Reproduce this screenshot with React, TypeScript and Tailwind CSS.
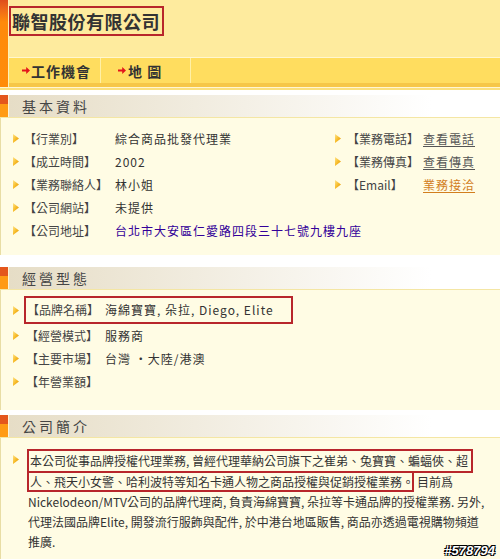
import React from "react";

const Bullet = () => (
  <svg width="6" height="9" viewBox="0 0 6 9" className="shrink-0">
    <defs>
      <linearGradient id="bulletg" x1="0" y1="0" x2="1" y2="1">
        <stop offset="0" stopColor="#FFE48A" />
        <stop offset="0.5" stopColor="#F7BC2A" />
        <stop offset="1" stopColor="#E08E00" />
      </linearGradient>
    </defs>
    <polygon points="0,0 6,4.5 0,9" fill="url(#bulletg)" />
  </svg>
);

const NavArrow = () => (
  <svg width="8" height="7" viewBox="0 0 8 7" className="shrink-0">
    <path d="M0 2.5h4.2V0L8 3.5 4.2 7V4.5H0z" fill="#E3141B" />
  </svg>
);

const SectionHeader = ({ title }: { title: string }) => (
  <div className="flex h-[23px] border-b border-[#F4E6A4]">
    <div className="w-[8px] flex flex-col">
      <div className="h-[9px] bg-[#E4561C]" />
      <div className="flex-1 bg-[#FF9A14]" />
    </div>
    <div className="w-[1px] bg-[#FFF4D6]" />
    <div className="flex-1 flex items-center pl-[13px] bg-[linear-gradient(to_right,#E6DDC6,#FFFFFF_86%)] text-[14px] tracking-[3px] text-[#454545] leading-none">
      {title}
    </div>
  </div>
);

const leftRows: { label: string; value: string; purple?: boolean }[] = [
  { label: "【行業別】", value: "綜合商品批發代理業" },
  { label: "【成立時間】", value: "2002" },
  { label: "【業務聯絡人】", value: "林小姐" },
  { label: "【公司網站】", value: "未提供" },
  { label: "【公司地址】", value: "台北市大安區仁愛路四段三十七號九樓九座", purple: true },
];

const rightRows: { label: string; value: string; orange?: boolean }[] = [
  { label: "【業務電話】", value: "查看電話" },
  { label: "【業務傳真】", value: "查看傳真" },
  { label: "【Email】", value: "業務接洽", orange: true },
];

export default function App() {
  return (
    <div className="relative w-[500px] h-[559px] overflow-hidden bg-white font-['Noto_Sans_CJK_TC','Noto_Sans',sans-serif] text-[#333]">
      {/* top area */}
      <div className="flex h-[87px]">
        <div className="w-[8px] bg-[linear-gradient(to_bottom,#DE4E1C_0px,#EF6A18_10px,#FF8A0A_22px,#FF8C0A_100%)]" />
        <div className="w-[1px] bg-[#FFF1B8]" />
        <div className="flex-1 flex flex-col">
          <div className="h-[57px] bg-[#FEEB9E] pt-[6px]">
            <div className="w-[155px] h-[30px] border-2 border-[#B8262B] flex items-center pl-[1px] text-[18px] font-bold leading-none text-[#333] tracking-[0.5px]">
              聯智股份有限公司
            </div>
          </div>
          <div className="h-[1px] bg-[#FFF6CF]" />
          <div className="h-[25px] bg-[#FFDD5F] flex text-[14px] font-bold tracking-[1px] text-[#333] leading-none">
            <div className="w-[92px] flex items-center pl-[13px] gap-[1px] border-r border-[#FFF0A6]">
              <NavArrow />
              <span>工作機會</span>
            </div>
            <div className="w-[90px] flex items-center pl-[17px] gap-[2px] border-r border-[#FFF0A6]">
              <NavArrow />
              <span className="whitespace-pre">地 圖</span>
            </div>
          </div>
          <div className="h-[4px] bg-[#F6C747]" />
        </div>
      </div>
      <div className="h-[1px] bg-[#FFF6D2]" />
      <div className="h-[2px] bg-[#FBE07C]" />
      <div className="h-[5px] bg-white" />

      {/* 基本資料 */}
      <SectionHeader title="基本資料" />
      <div className="h-[137px] bg-[#FFFCE4] border-l border-[#E8DDA4] pt-[9px] text-[12px] leading-none">
        {leftRows.map((r, i) => {
          const rr = rightRows[i];
          return (
            <div key={i} className="flex items-center h-[23px]">
              <div className="w-[23px] pl-[12px] flex items-center">
                <Bullet />
              </div>
              <div className="w-[91px] whitespace-nowrap text-[#444]">{r.label}</div>
              <div
                className={`w-[220px] whitespace-nowrap tracking-[1px] ${r.purple ? "text-[#330099]" : "text-[#333]"}`}
              >
                {r.value}
              </div>
              {rr && (
                <>
                  <div className="w-[12px] flex items-center">
                    <Bullet />
                  </div>
                  <div className="w-[76px] whitespace-nowrap text-[#444]">{rr.label}</div>
                  <div
                    className={`whitespace-nowrap tracking-[1px] underline underline-offset-2 ${rr.orange ? "text-[#D27E1E]" : "text-[#555]"}`}
                  >
                    {rr.value}
                  </div>
                </>
              )}
            </div>
          );
        })}
      </div>
      <div className="h-[12px] bg-white" />

      {/* 經營型態 */}
      <SectionHeader title="經營型態" />
      <div className="h-[120px] bg-[#FFFCE4] border-l border-[#E8DDA4] pt-[6px] text-[12px] leading-none">
        <div className="flex items-center h-[28px]">
          <div className="w-[23px] pl-[12px] flex items-center">
            <Bullet />
          </div>
          <div className="w-[269px] h-[28px] border-2 border-[#B8262B] flex items-center pl-[1px]">
            <div className="w-[78px] whitespace-nowrap text-[#444]">【品牌名稱】</div>
            <div className="whitespace-nowrap tracking-[1px]">海綿寶寶, 朵拉, Diego, Elite</div>
          </div>
        </div>
        {[
          ["【經營模式】", "服務商"],
          ["【主要市場】", "台灣 •大陸/港澳"],
          ["【年營業額】", ""],
        ].map(([l, v], i) => (
          <div key={i} className="flex items-center h-[23px]">
            <div className="w-[23px] pl-[12px] flex items-center">
              <Bullet />
            </div>
            <div className="w-[81px] pl-[2px] whitespace-nowrap text-[#444]">{l}</div>
            <div className="whitespace-pre tracking-[1px]">{v}</div>
          </div>
        ))}
      </div>
      <div className="h-[5px] bg-white" />

      {/* 公司簡介 */}
      <SectionHeader title="公司簡介" />
      <div className="h-[200px] bg-[#FFFCE4] border-l border-[#E8DDA4] pt-[11px] flex text-[12px]">
        <div className="w-[26px] pl-[12px] pt-[6px]">
          <Bullet />
        </div>
        <div className="flex flex-col whitespace-nowrap text-[#333]">
          <div className="w-[446px] h-[24px] border-2 border-[#B8262B] flex items-center pl-[1px] leading-none">
            本公司從事品牌授權代理業務, 曾經代理華納公司旗下之崔弟、兔寶寶、蝙蝠俠、超
          </div>
          <div className="flex items-center -mt-[2px] h-[21px] leading-none">
            <div className="w-[387px] h-[21px] border-2 border-[#B8262B] flex items-center pl-[1px]">
              人、飛天小女警、哈利波特等知名卡通人物之商品授權與促銷授權業務。
            </div>
            <span className="pl-[3px]">目前爲</span>
          </div>
          <div className="pl-[1px] leading-[20px]">
            Nickelodeon/MTV公司的品牌代理商, 負責海綿寶寶, 朵拉等卡通品牌的授權業務. 另外,
          </div>
          <div className="pl-[1px] leading-[20px]">
            代理法國品牌Elite, 開發流行服飾與配件, 於中港台地區販售, 商品亦透過電視購物頻道
          </div>
          <div className="pl-[1px] leading-[20px]">推廣.</div>
        </div>
      </div>

      <div className="absolute right-[5px] bottom-[2px] text-[13px] font-bold italic text-white font-['Liberation_Sans',sans-serif] leading-none [text-shadow:-1px_-1px_0_#000,1px_-1px_0_#000,-1px_1px_0_#000,1px_1px_0_#000]">
        #578794
      </div>
    </div>
  );
}
